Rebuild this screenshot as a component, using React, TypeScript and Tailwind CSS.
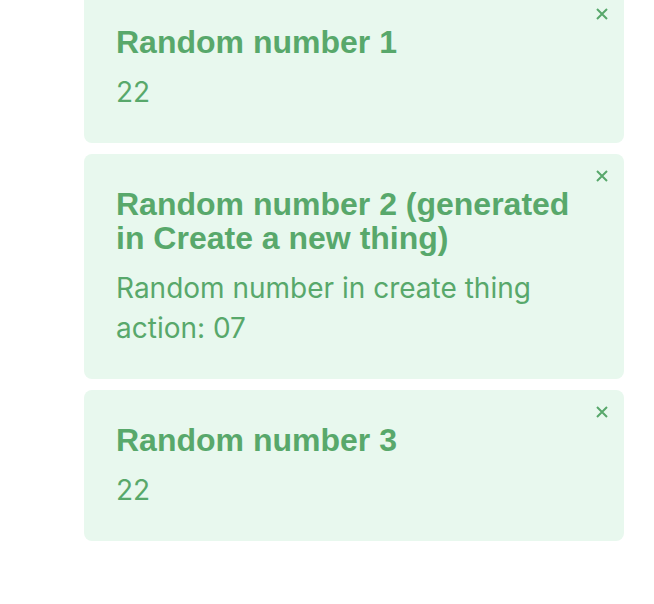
import { useState } from "react";

type Item = { id: number; title: string; body: string };

const ITEMS: Item[] = [
  { id: 1, title: "Random number 1", body: "22" },
  {
    id: 2,
    title: "Random number 2 (generated in Create a new thing)",
    body: "Random number in create thing action: 07",
  },
  { id: 3, title: "Random number 3", body: "22" },
];

function CloseIcon() {
  return (
    <svg width="12" height="12" viewBox="0 0 12 12" fill="none">
      <path d="M1 1L11 11M11 1L1 11" stroke="currentColor" strokeWidth="2" />
    </svg>
  );
}

export default function App() {
  const [items, setItems] = useState(ITEMS);

  return (
    <div className="min-h-screen bg-white font-['Inter',sans-serif]">
      <div className="ml-[84px] flex w-[540px] flex-col gap-[11px] -mt-[8px]">
        {items.map((it) => (
          <div
            key={it.id}
            className="relative rounded-lg bg-[#e8f8ee] pt-[33px] pb-[31px] pl-[32px] pr-[50px] text-[#58a86b]"
          >
            <button
              onClick={() => setItems((prev) => prev.filter((p) => p.id !== it.id))}
              className="absolute top-[16px] right-[16px] text-[#58a86b]"
              aria-label="Close"
            >
              <CloseIcon />
            </button>
            <h3 className="font-['Liberation_Sans',Arial,sans-serif] text-[32px] font-bold leading-[34px]">
              {it.title}
            </h3>
            <p className="mt-[13px] text-[28px] leading-[40px]">{it.body}</p>
          </div>
        ))}
      </div>
    </div>
  );
}
